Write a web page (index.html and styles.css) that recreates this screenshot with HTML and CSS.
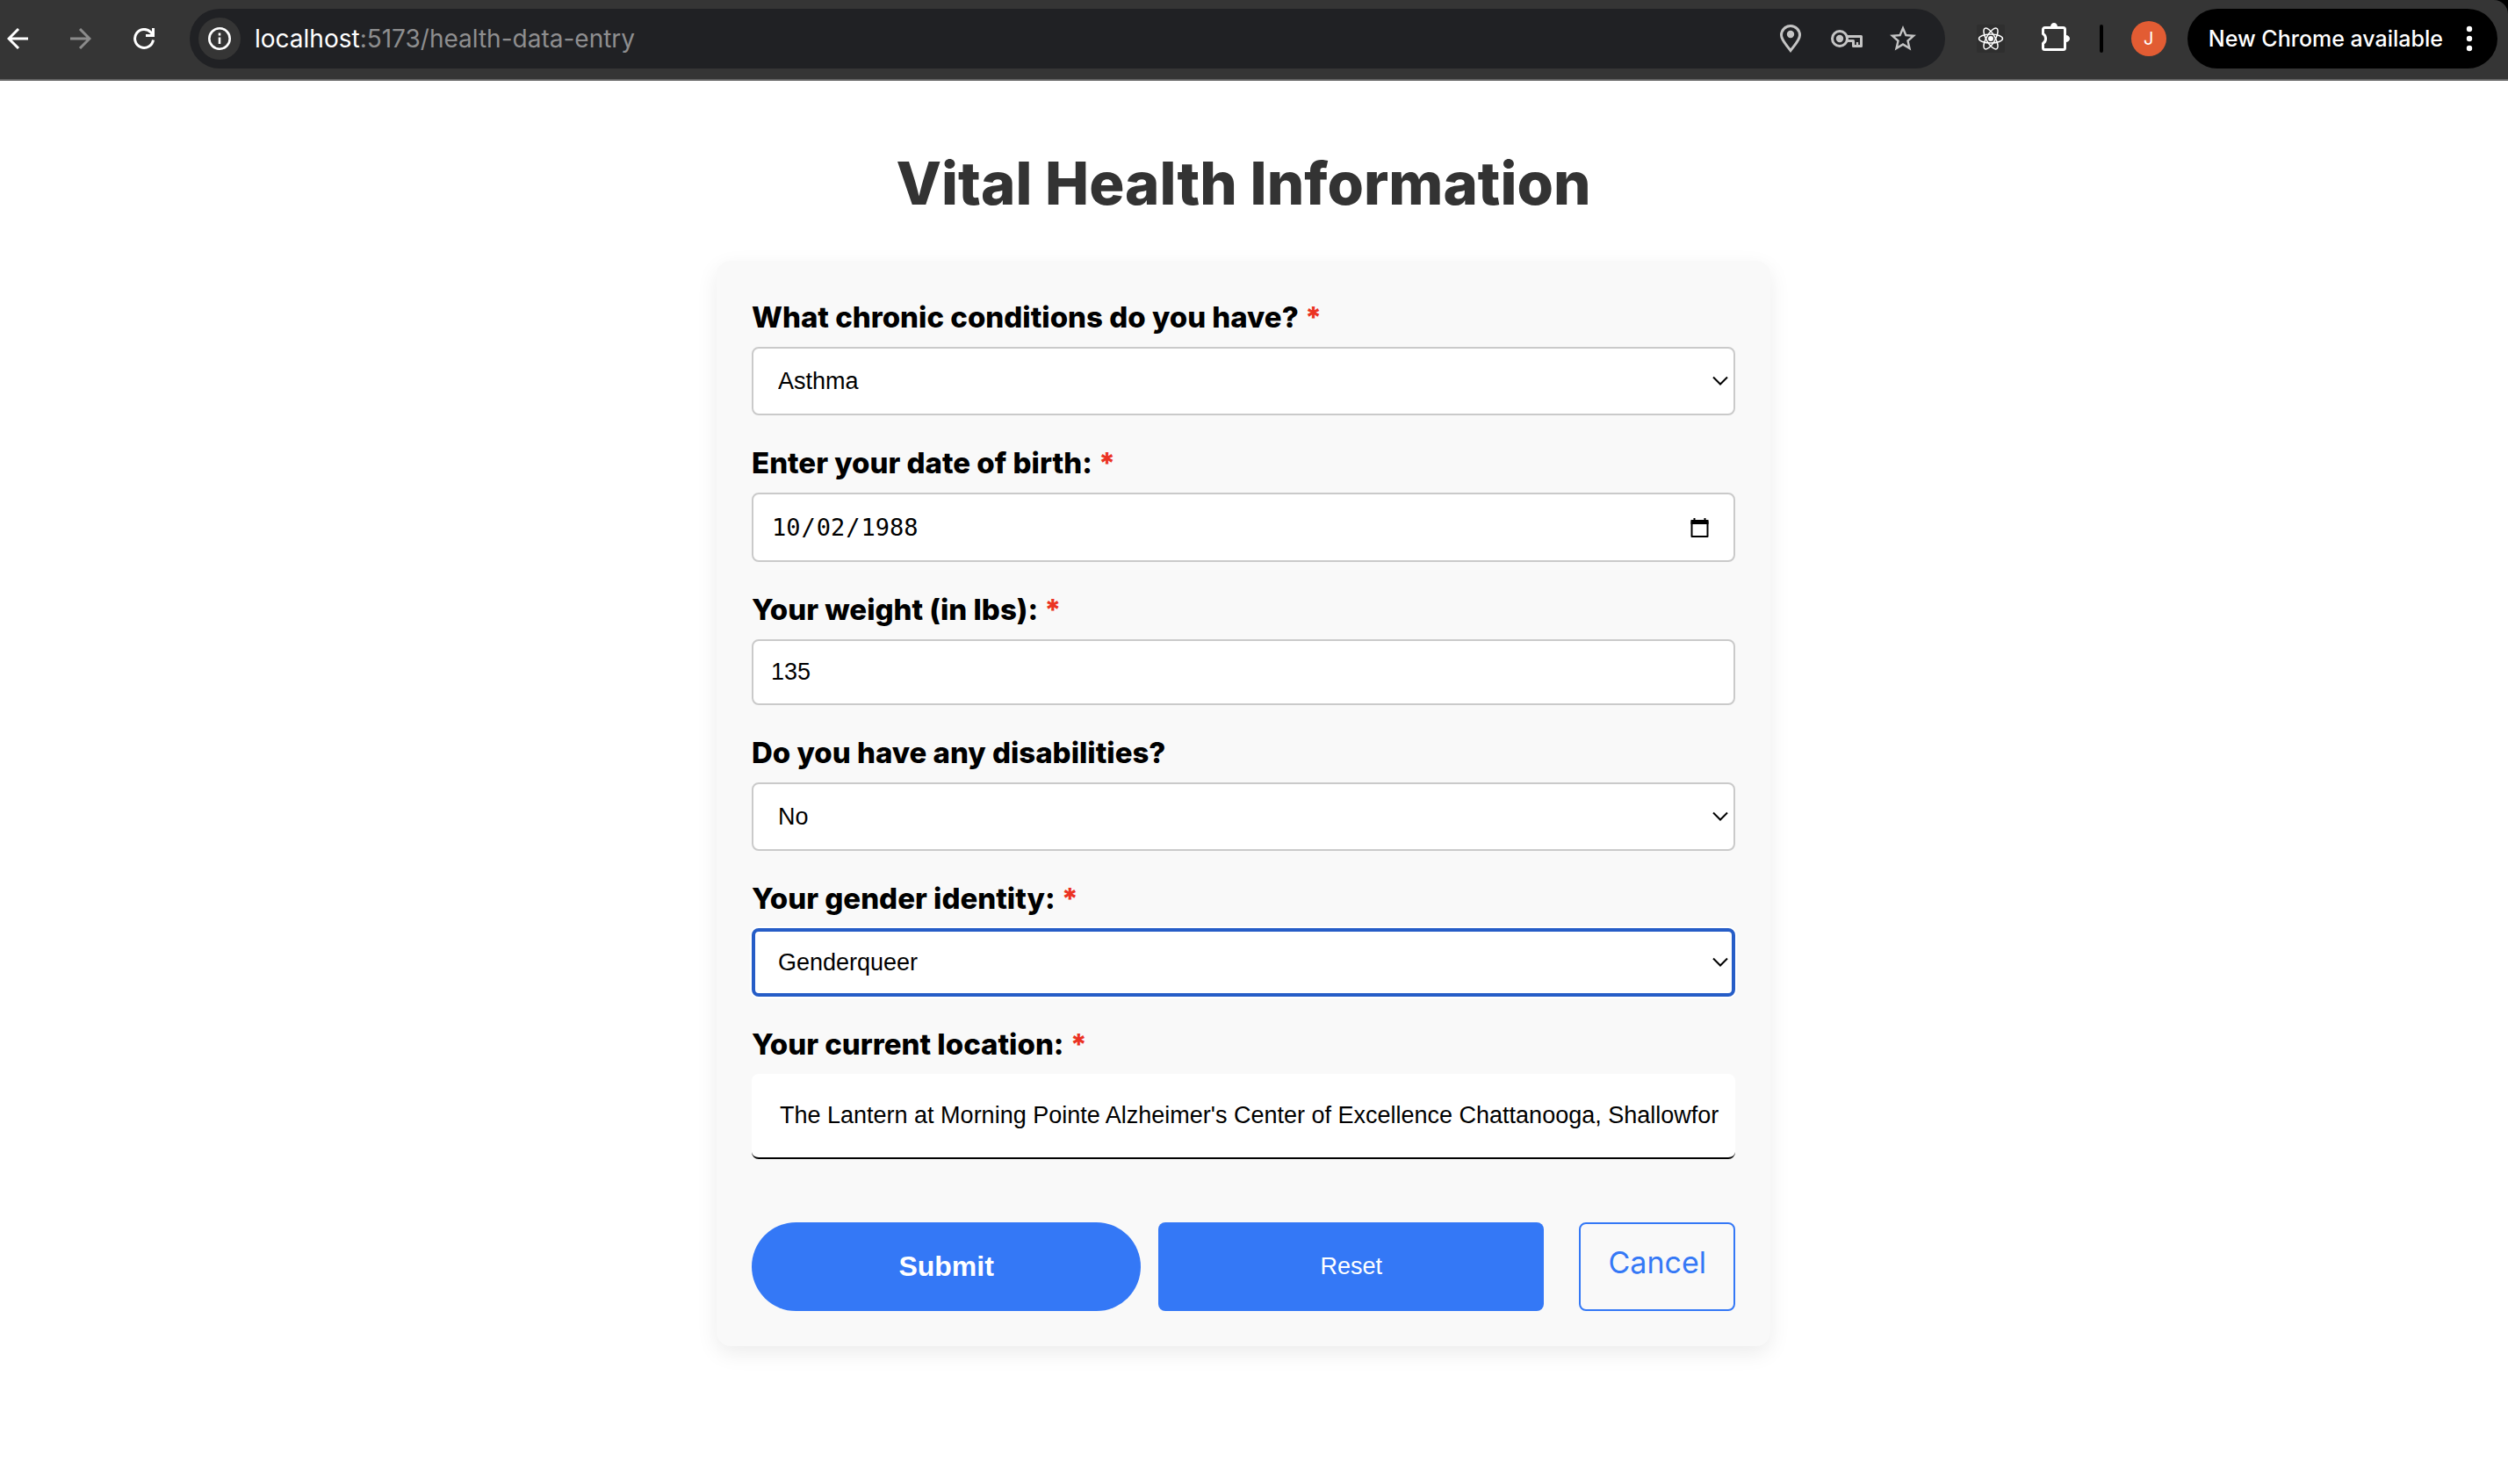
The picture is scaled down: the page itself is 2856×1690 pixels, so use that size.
FILE: index.html
```html
<!DOCTYPE html>
<html lang="en">
<head>
<meta charset="utf-8">
<meta name="viewport" content="width=device-width, initial-scale=1">
<title>Vital Health Information</title>
<link rel="stylesheet" href="styles.css">
</head>
<body>
<header class="browser">
  <div class="toolbar">
    <nav class="history" aria-label="History">
      <button class="icon-button" type="button" aria-label="Back">
        <svg width="24" height="24" viewBox="0 0 24 24" fill="none" stroke="#fff" stroke-width="3"><path d="M24 12H2M13 1 2 12l11 11"/></svg>
      </button>
      <button class="icon-button" type="button" aria-label="Forward">
        <svg width="24" height="24" viewBox="0 0 24 24" fill="none" stroke="#8b8b8b" stroke-width="3"><path d="M0 12h22M11 1l11 11-11 11"/></svg>
      </button>
      <button class="icon-button" type="button" aria-label="Reload">
        <svg width="24" height="24" viewBox="0 0 24 24" fill="none" stroke="#fff" stroke-width="3"><path d="M22.5 13.5A10.5 10.5 0 1 1 20 5l2 3"/><path d="M22.5 0v8.500H14"/></svg>
      </button>
    </nav>
    <div class="address">
      <button class="icon-button site-info" type="button" aria-label="Site information">
        <svg width="28" height="28" viewBox="0 0 28 28" fill="none" stroke="#fff"><circle cx="14" cy="14" r="11.700" stroke-width="2.600"/><path d="M14 12.500v7.500M14 7.500v3" stroke-width="2.600"/></svg>
      </button>
      <span class="url"><span class="url-host">localhost</span>:5173/health-data-entry</span>
      <button class="icon-button" type="button" aria-label="Location">
        <svg width="24" height="32" viewBox="0 0 24 32"><path d="M12 29.500C7 23 1.500 17.500 1.500 12a10.500 10.500 0 0 1 21 0C22.500 17.500 17 23 12 29.500z" fill="none" stroke="#c4c4c4" stroke-width="3"/><circle cx="12" cy="11" r="4.200" fill="#c4c4c4"/></svg>
      </button>
      <button class="icon-button key" type="button" aria-label="Passwords">
        <svg width="36" height="24" viewBox="0 0 36 24" fill="none" stroke="#c4c4c4" stroke-width="3"><circle cx="10" cy="12" r="8.500"/><circle cx="10" cy="12" r="4.200" fill="#c4c4c4" stroke="none"/><path d="M18 9.500h16.500v11h-9v-6H18" stroke-linejoin="round"/><path d="M30 16v5" stroke-width="2.400"/></svg>
      </button>
      <button class="icon-button" type="button" aria-label="Bookmark">
        <svg width="36" height="36" viewBox="0 0 24 24" fill="#c4c4c4"><path d="M22 9.240l-7.190-.62L12 2 9.190 8.630 2 9.240l5.460 4.730L5.820 21 12 17.270 18.180 21l-1.630-7.030L22 9.240zM12 15.400l-3.760 2.270 1-4.280-3.320-2.880 4.380-.38L12 6.100l1.710 4.040 4.380.38-3.320 2.880 1 4.280L12 15.400z"/></svg>
      </button>
    </div>
    <button class="icon-button react" type="button" aria-label="React Developer Tools">
      <svg width="32" height="32" viewBox="0 0 32 32" fill="none" stroke="#fff" stroke-width="1.500"><g><ellipse cx="16" cy="16" rx="13.500" ry="5"/><ellipse cx="16" cy="16" rx="13.500" ry="5" transform="rotate(60 16 16)"/><ellipse cx="16" cy="16" rx="13.500" ry="5" transform="rotate(120 16 16)"/></g><circle cx="16" cy="16" r="3" fill="#fff" stroke="none"/></svg>
    </button>
    <button class="icon-button extensions" type="button" aria-label="Extensions">
      <svg width="32" height="36" viewBox="0 0 32 36"><path d="M3.500 5.500h21a2 2 0 0 1 2 2v21a2 2 0 0 1-2 2h-21a2 2 0 0 1-2-2v-5a6.500 6.500 0 0 0 0-11v-5a2 2 0 0 1 2-2z" fill="none" stroke="#fff" stroke-width="3"/><path d="M10 4.500a4 4.500 0 0 1 8 0zM27.500 14a4.500 4 0 0 1 0 8z" fill="#fff"/></svg>
    </button>
    <span class="divider"></span>
    <button class="avatar" type="button" aria-label="Profile">J</button>
    <button class="update" type="button">New Chrome available
      <svg width="8" height="32" viewBox="0 0 8 32" fill="#fff"><circle cx="4" cy="5" r="3.200"/><circle cx="4" cy="16" r="3.200"/><circle cx="4" cy="27" r="3.200"/></svg>
    </button>
  </div>
</header>

<main class="page">
  <h1 class="title">Vital Health Information</h1>
  <form class="card">
    <div class="field">
      <label class="label" for="conditions">What chronic conditions do you have? <span class="required">*</span></label>
      <select class="control select" id="conditions"><option>Asthma</option></select>
    </div>
    <div class="field">
      <label class="label" for="birth">Enter your date of birth: <span class="required">*</span></label>
      <input class="control date" id="birth" type="date" value="1988-10-02">
    </div>
    <div class="field">
      <label class="label" for="weight">Your weight (in lbs): <span class="required">*</span></label>
      <input class="control number" id="weight" type="text" inputmode="numeric" value="135">
    </div>
    <div class="field">
      <label class="label" for="disabilities">Do you have any disabilities?</label>
      <select class="control select" id="disabilities"><option>No</option></select>
    </div>
    <div class="field">
      <label class="label" for="gender">Your gender identity: <span class="required">*</span></label>
      <select class="control select active" id="gender"><option>Genderqueer</option></select>
    </div>
    <div class="field">
      <label class="label" for="location">Your current location: <span class="required">*</span></label>
      <input class="control location" id="location" type="text" value="The Lantern at Morning Pointe Alzheimer's Center of Excellence Chattanooga, Shallowfor">
    </div>
    <div class="actions">
      <button class="button submit" type="submit">Submit</button>
      <button class="button" type="reset">Reset</button>
      <a class="cancel" href="#">Cancel</a>
    </div>
  </form>
</main>
</body>
</html>
```
FILE: styles.css
```css
*,
*::before,
*::after {
  box-sizing: border-box;
}

body {
  margin: 0;
  background: #fff;
  color: #000;
  font-family: Inter, "Liberation Sans", sans-serif;
}

button {
  margin: 0;
  padding: 0;
  border: 0;
  background: none;
  font: inherit;
  cursor: pointer;
}

svg {
  display: block;
}

/* Browser toolbar */

.browser {
  background: #000;
  border-bottom: 2px solid #636363;
}

.toolbar {
  display: flex;
  align-items: center;
  padding: 10px 12px 12px 8px;
  background: #353535;
  border-top-right-radius: 16px;
}

.icon-button {
  display: flex;
  align-items: center;
  justify-content: center;
  flex: none;
}

.history {
  display: flex;
  gap: 48px;
  margin-right: 40px;
}

.address {
  display: flex;
  flex: 1;
  align-items: center;
  min-width: 0;
  padding: 10px 30px 10px 10px;
  border-radius: 34px;
  background: #202124;
}

.site-info {
  width: 48px;
  height: 48px;
  margin-right: 16px;
  border-radius: 50%;
  background: #353535;
}

.url {
  flex: 1;
  min-width: 0;
  overflow: hidden;
  color: #8e8e8f;
  font-size: 28px;
  line-height: 48px;
  white-space: nowrap;
}

.url-host {
  color: #fff;
}

.key {
  margin: 0 28px 0 34px;
}

.react {
  margin: 0 42px 0 36px;
  border-radius: 2px;
  background: #2f2f2f;
}

.extensions {
  margin-right: 34px;
}

.divider {
  width: 4px;
  height: 32px;
  border-radius: 2px;
  background: #000;
}

.avatar {
  width: 40px;
  height: 40px;
  margin: 0 24px 0 32px;
  border-radius: 50%;
  background: #e25c33;
  color: #fff;
  font-size: 20px;
  line-height: 40px;
}

.update {
  display: flex;
  align-items: center;
  gap: 26px;
  padding: 0 28px 0 24px;
  border-radius: 34px;
  background: #000;
  color: #fff;
  font-size: 25px;
  font-weight: 500;
  line-height: 68px;
  white-space: nowrap;
}

/* Page */

.page {
  padding: 69px 24px 40px 0;
}

.title {
  margin: 0 0 40px;
  color: #333;
  font-size: 67px;
  font-weight: 800;
  line-height: 96px;
  text-align: center;
}

.card {
  max-width: 1200px;
  margin: 0 auto;
  padding: 40px;
  border-radius: 16px;
  background: #f9f9f9;
  box-shadow: 0 8px 24px rgba(0, 0, 0, 0.08);
}

.field {
  margin-bottom: 30px;
}

.label {
  display: block;
  margin-bottom: 10px;
  font-size: 33px;
  font-weight: 800;
  line-height: 48px;
}

.required {
  color: #eb3323;
}

.control {
  display: block;
  width: 100%;
  margin: 0;
  border: 2px solid #cacaca;
  border-radius: 8px;
  background-color: #fff;
  color: #000;
  font-family: "Liberation Sans", Arial, sans-serif;
  font-size: 27px;
}

.select {
  height: 78px;
  padding: 0 48px 0 28px;
  appearance: none;
  background-image: url("data:image/svg+xml,%3Csvg xmlns='http://www.w3.org/2000/svg' width='18' height='12' fill='none' stroke='%23000' stroke-width='2'%3E%3Cpath d='M1 1.500l8 8 8-8'/%3E%3C/svg%3E");
  background-repeat: no-repeat;
  background-position: right 6px center;
}

.active {
  padding-left: 26px;
  border: 4px solid #265dc7;
  background-position: right 4px center;
  box-shadow: 0 0 0 2px #fff;
  outline: none;
}

.date {
  height: 79px;
  padding: 0 26px 0 20px;
  font-family: "DejaVu Sans Mono", monospace;
}

.date::-webkit-calendar-picker-indicator {
  width: 24px;
  height: 24px;
  padding: 0;
  background: url("data:image/svg+xml,%3Csvg xmlns='http://www.w3.org/2000/svg' width='24' height='24'%3E%3Cpath d='M2.500 5h18v17h-18z' fill='none' stroke='%23000' stroke-width='2' stroke-linejoin='round'/%3E%3Cpath d='M1.500 3h3V1h2v2h10V1h2v2h3v5h-20z'/%3E%3C/svg%3E") center no-repeat;
}

.number {
  height: 75px;
  padding: 0 20px;
}

.location {
  height: 97px;
  padding: 0 14px 0 32px;
  border-width: 0 0 2px;
  border-color: #000;
}

.actions {
  display: grid;
  grid-template-columns: 443fr 439fr auto;
  column-gap: 20px;
  margin-top: 72px;
}

.button {
  border-radius: 8px;
  background: #3478f6;
  color: #fff;
  font-family: "Liberation Sans", Arial, sans-serif;
  font-size: 27px;
}

.submit {
  border-radius: 56px;
  font-size: 32px;
  font-weight: 700;
}

.cancel {
  margin-left: 20px;
  padding: 20px 31px 29px;
  border: 2px solid #3478f6;
  border-radius: 8px;
  color: #3478f6;
  font-size: 34px;
  line-height: 48px;
  text-decoration: none;
}
```
